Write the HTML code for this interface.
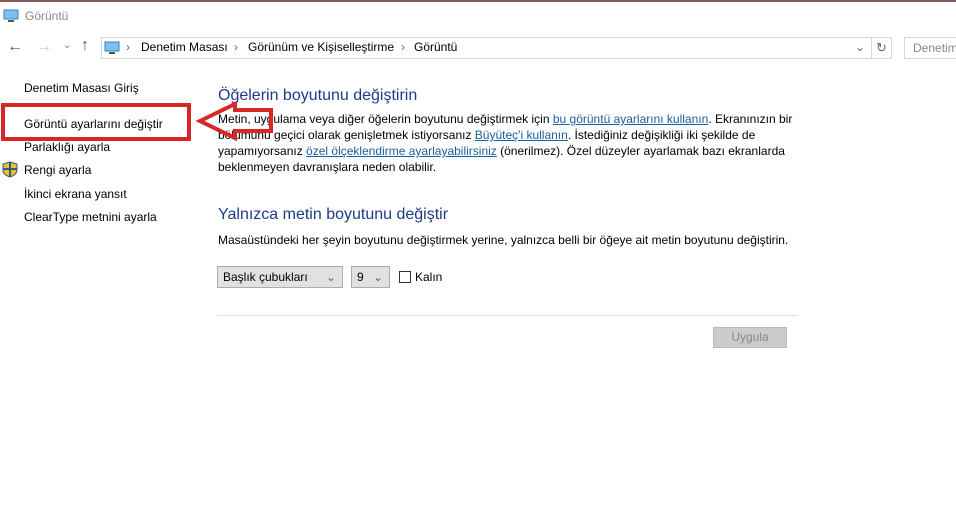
<!DOCTYPE html><html><head><meta charset="utf-8"><style>
body{margin:0;width:956px;height:507px;background:#fff;font-family:"Liberation Sans",sans-serif;font-size:12px;color:#000;position:relative;overflow:hidden}
.a{position:absolute;white-space:nowrap}
.l{color:#1a5fa0;text-decoration:underline}
h{color:#1e3a8a;font-size:16px}
.sel{position:absolute;height:22px;background:#e1e1e1;border:1px solid #adadad;box-sizing:border-box;font-size:12px;line-height:20px;padding-left:5px}
</style></head><body>
<div class="a" style="left:0;top:0;width:956px;height:2px;background:#8b5a5a"></div>
<svg class="a" style="left:3px;top:9px" width="16" height="13"><rect x="1" y="1" width="14" height="9" fill="#7ec0f0" stroke="#3a7fbf"/><rect x="5" y="11" width="6" height="2" fill="#555"/></svg>
<div class="a" style="left:25px;top:9px;color:#888">Görüntü</div>
<div class="a" style="left:7px;top:38px;font-size:16px;color:#555">←</div>
<div class="a" style="left:36px;top:38px;font-size:16px;color:#ccc">→</div>
<div class="a" style="left:63px;top:40px;font-size:10px;color:#777">⌄</div>
<div class="a" style="left:81px;top:37px;font-size:16px;color:#555">↑</div>
<div class="a" style="left:101px;top:37px;width:771px;height:22px;border:1px solid #d9d9d9;box-sizing:border-box"></div>
<div class="a" style="left:871px;top:37px;width:21px;height:22px;border:1px solid #d9d9d9;box-sizing:border-box;text-align:center;line-height:20px;color:#666;font-size:13px">↻</div>
<div class="a" style="left:904px;top:37px;width:60px;height:22px;border:1px solid #d9d9d9;box-sizing:border-box;line-height:20px;padding-left:8px;color:#888">Denetim</div>
<svg class="a" style="left:104px;top:41px" width="16" height="13"><rect x="1" y="1" width="14" height="9" fill="#7ec0f0" stroke="#3a7fbf"/><rect x="5" y="11" width="6" height="2" fill="#555"/></svg>
<div class="a" style="left:126px;top:40px;color:#666">›</div>
<div class="a" style="left:141px;top:40px">Denetim Masası</div>
<div class="a" style="left:234px;top:40px;color:#666">›</div>
<div class="a" style="left:248px;top:40px">Görünüm ve Kişiselleştirme</div>
<div class="a" style="left:401px;top:40px;color:#666">›</div>
<div class="a" style="left:414px;top:40px">Görüntü</div>
<div class="a" style="left:855px;top:40px;color:#666">⌄</div>
<div class="a" style="left:24px;top:81px">Denetim Masası Giriş</div>
<div class="a" style="left:24px;top:117px">Görüntü ayarlarını değiştir</div>
<div class="a" style="left:24px;top:140px">Parlaklığı ayarla</div>
<svg class="a" style="left:2px;top:161px" width="16" height="17"><path d="M8 1L15 3V9C15 13 11 15 8 16C5 15 1 13 1 9V3Z" fill="#f0c020" stroke="#2a5a9a"/><path d="M8 1V16M1 8H15" stroke="#2a5a9a" stroke-width="2"/></svg>
<div class="a" style="left:24px;top:163px">Rengi ayarla</div>
<div class="a" style="left:24px;top:187px">İkinci ekrana yansıt</div>
<div class="a" style="left:24px;top:210px">ClearType metnini ayarla</div>
<div class="a" style="left:218px;top:87px"><h>Öğelerin boyutunu değiştirin</h></div>
<div class="a" style="left:218px;top:111px;line-height:16px;width:590px;white-space:normal">Metin, uygulama veya diğer öğelerin boyutunu değiştirmek için <span class="l">bu görüntü ayarlarını kullanın</span>. Ekranınızın bir bölümünü geçici olarak genişletmek istiyorsanız <span class="l">Büyüteç'i kullanın</span>. İstediğiniz değişikliği iki şekilde de yapamıyorsanız <span class="l">özel ölçeklendirme ayarlayabilirsiniz</span> (önerilmez). Özel düzeyler ayarlamak bazı ekranlarda beklenmeyen davranışlara neden olabilir.</div>
<div class="a" style="left:218px;top:206px"><h>Yalnızca metin boyutunu değiştir</h></div>
<div class="a" style="left:218px;top:233px">Masaüstündeki her şeyin boyutunu değiştirmek yerine, yalnızca belli bir öğeye ait metin boyutunu değiştirin.</div>
<div class="sel" style="left:217px;top:266px;width:126px">Başlık çubukları<span style="position:absolute;right:6px;color:#666">⌄</span></div>
<div class="sel" style="left:351px;top:266px;width:39px">9<span style="position:absolute;right:6px;color:#666">⌄</span></div>
<div class="a" style="left:399px;top:271px;width:12px;height:12px;border:1px solid #333;box-sizing:border-box"></div>
<div class="a" style="left:415px;top:270px">Kalın</div>
<div class="a" style="left:217px;top:315px;width:581px;height:1px;background:#ddd"></div>
<div class="a" style="left:713px;top:327px;width:74px;height:21px;background:#ccc;border:1px solid #bbb;box-sizing:border-box;text-align:center;line-height:19px;color:#888">Uygula</div>
<div class="a" style="left:1px;top:103px;width:190px;height:38px;border:4px solid #d62828;box-sizing:border-box"></div>
<svg class="a" style="left:0;top:0" width="300" height="160"><polygon points="200,121 235,104 235,110 271,110 271,131 235,131 235,138" fill="none" stroke="#d62828" stroke-width="4" stroke-linejoin="miter"/></svg>
</body></html>
